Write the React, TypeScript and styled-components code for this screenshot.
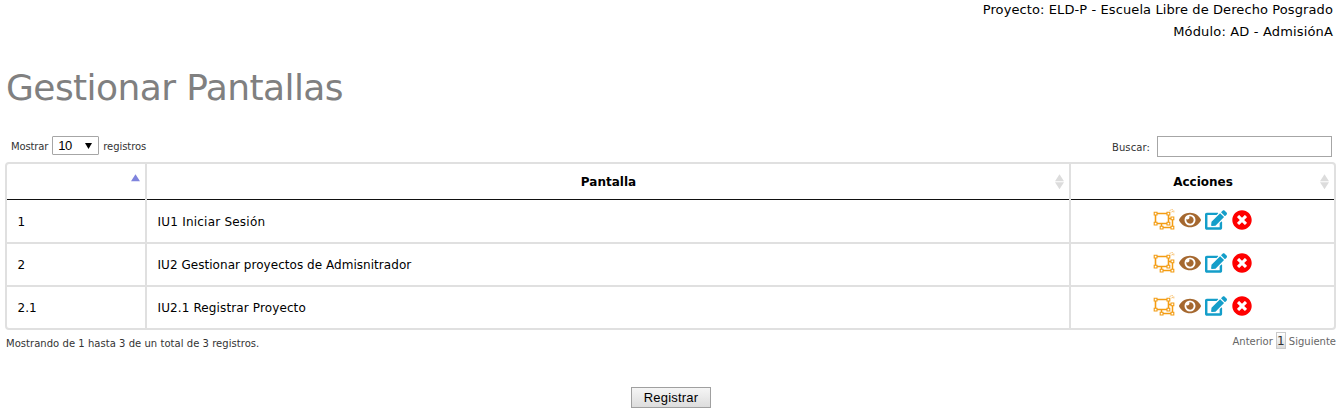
import React from "react";
import styled, { createGlobalStyle } from "styled-components";
import { FaEdit, FaEye, FaTimesCircle } from "react-icons/fa";

const GlobalStyle = createGlobalStyle`
  * { box-sizing: border-box; }
  body { margin: 0; background: #fff; color: #000; font: 12px/20px Verdana, "DejaVu Sans", sans-serif; }
`;

const Page = styled.div`
  width: 1336px;
  height: 412px;
  padding-left: 5px;
  overflow: hidden;
  display: flex;
  flex-direction: column;
`;

const Context = styled.div`
  height: 65px;
  margin-top: -1px;
  padding-right: 3px;
  display: flex;
  flex-direction: column;
  align-items: flex-end;
  line-height: 22px;
  font-size: 13px;
`;

const Label = styled.span<{ $spacing?: number }>`
  white-space: pre;
  letter-spacing: ${(p) => p.$spacing ?? 0}px;
`;

const Title = styled.h1`
  margin: 0;
  padding-left: 1px;
  height: 72px;
  font-size: 36px;
  line-height: 48px;
  font-weight: 400;
  color: #808080;
`;

const Toolbar = styled.div`
  height: 26px;
  padding: 0 4px 0 6px;
  display: flex;
  justify-content: space-between;
  align-items: flex-start;
  font-size: 10px;
  color: #333;
`;

const Field = styled.label<{ $line: number }>`
  display: flex;
  align-items: flex-start;
  line-height: ${(p) => p.$line}px;
`;

const Select = styled.span`
  width: 47px;
  height: 19px;
  margin: 0 4px;
  padding: 0 6px 0 5px;
  border: 1px solid #a6a6a6;
  border-radius: 1px;
  display: flex;
  align-items: center;
  justify-content: space-between;
  font: 13px/17px "Liberation Sans", Arial, sans-serif;
  letter-spacing: -0.4px;
  color: #000;
`;

const Search = styled.input`
  width: 175px;
  height: 21px;
  margin-left: 7px;
  border: 1px solid #a6a6a6;
`;

const Table = styled.div`
  width: 1331px;
  border: 2px solid #e0e0e0;
  border-radius: 4px;
`;

const Row = styled.div<{ $head?: boolean }>`
  display: grid;
  grid-template-columns: 140px 924px 263px;
  height: ${(p) => (p.$head ? 37 : 43)}px;
  border-bottom: ${(p) => (p.$head ? "0" : "2px solid #e0e0e0")};
  &:last-child { height: 41px; border-bottom: 0; }
`;

const Cell = styled.div`
  display: flex;
  align-items: center;
  padding: 1px 0 0 10.5px;
  border-right: 2px solid #e0e0e0;
  &:last-child { border-right: 0; }
`;

const HeadCell = styled(Cell)`
  padding: 0 5px 2px 15px;
  font-weight: 700;
  background: linear-gradient(#111, #111) 0 35px / 100% 1px no-repeat border-box;
  > span { flex: 1; text-align: center; }
`;

const Actions = styled(Cell)`
  justify-content: center;
  gap: 4px;
  padding: 0 0 3px 0;
  > :last-child { margin-left: 1px; }
`;

const Icon = styled.svg`
  display: block;
  flex: none;
`;

const Footer = styled.div`
  height: 57px;
  display: flex;
  justify-content: space-between;
  font-size: 10px;
  color: #333;
`;

const Info = styled.div`
  padding-left: 1px;
  line-height: 27px;
`;

const Pager = styled.div`
  display: flex;
  line-height: 23px;
  color: #666;
`;

const PageNumber = styled.span`
  width: 10px;
  height: 17px;
  margin: 2px 3px 0 3px;
  border: 1px solid #cacaca;
  background: linear-gradient(#fff, #dcdcdc);
  color: #333;
  font-size: 12px;
  line-height: 16px;
  display: flex;
  justify-content: center;
`;

const Submit = styled.button`
  width: 80px;
  height: 21px;
  margin-left: 626px;
  padding: 0;
  border: 1px solid #a0a0a0;
  background: linear-gradient(#f5f5f5, #dddddd);
  font: 13px/17px "Liberation Sans", Arial, sans-serif;
  letter-spacing: 0.2px;
  color: #000;
`;

function Sort({ active = false }: { active?: boolean }) {
  return (
    <Icon width="9" height="16" viewBox="0 0 9 16">
      <path d="M0 7.3 4.5 0.3 9 7.3z" fill={active ? "#7f84dd" : "#dcdcdc"} />
      {!active && <path d="M0 8.3h9L4.5 15.3z" fill="#dcdcdc" />}
    </Icon>
  );
}

function UngroupIcon() {
  return (
    <Icon width="22" height="22" viewBox="0 0 22 22" fill="none" stroke="#f39c12">
      <path d="M16 9.5h3.5v9h-11V15" strokeWidth="1.5" />
      <path d="M18 8h2.8v2.8H18zM18 17.2h2.8V20H18zM7.2 17.2H10V20H7.2z" fill="#fff" strokeWidth="1.1" />
      <path d="M2.5 4.5h13v10h-13z" fill="#fff" strokeWidth="1.6" />
      <path d="M1.2 3.2H4V6H1.2zM14 3.2h2.8V6H14zM1.2 13.2H4V16H1.2zM14 13.2h2.8V16H14z" fill="#fff" strokeWidth="1.1" />
      <path d="M16.5 1.6l1.4-.6M18.4.6l1.6.2M18.4 3l1.6-.6 1.2 1M20.7 1.4l.6 1" stroke="#f7bd68" strokeWidth=".9" />
    </Icon>
  );
}

function RowActions() {
  return (
    <Actions>
      <UngroupIcon />
      <FaEye size={22} color="#a5682f" />
      <FaEdit size={22} color="#149ec9" />
      <FaTimesCircle size={20} color="#ff0000" />
    </Actions>
  );
}

const screens = [
  { id: "1", name: "IU1 Iniciar Sesión", spacing: 0.22 },
  { id: "2", name: "IU2 Gestionar proyectos de Admisnitrador", spacing: 0.04 },
  { id: "2.1", name: "IU2.1 Registrar Proyecto", spacing: 0.12 },
];

export default function App() {
  return (
    <>
      <GlobalStyle />
      <Page>
        <Context>
          <Label $spacing={0.1}>Proyecto: ELD-P - Escuela Libre de Derecho Posgrado</Label>
          <Label $spacing={0.16}>Módulo: AD - AdmisiónA</Label>
        </Context>
        <Title><Label $spacing={-0.58}>Gestionar Pantallas</Label></Title>
        <Toolbar>
          <Field $line={22}>
            <Label $spacing={-0.14}>Mostrar</Label>
            <Select>
              10
              <Icon width="7" height="6" viewBox="0 0 7 6"><path d="M0 0h7L3.5 6z" /></Icon>
            </Select>
            <Label $spacing={-0.06}>registros</Label>
          </Field>
          <Field $line={24}><Label $spacing={0.1}>Buscar:</Label><Search /></Field>
        </Toolbar>
        <Table>
          <Row $head>
            <HeadCell><span /><Sort active /></HeadCell>
            <HeadCell><span>Pantalla</span><Sort /></HeadCell>
            <HeadCell><span>Acciones</span><Sort /></HeadCell>
          </Row>
          {screens.map((s) => (
            <Row key={s.id}>
              <Cell><Label>{s.id}</Label></Cell>
              <Cell><Label $spacing={s.spacing}>{s.name}</Label></Cell>
              <RowActions />
            </Row>
          ))}
        </Table>
        <Footer>
          <Info><Label $spacing={0.04}>Mostrando de 1 hasta 3 de un total de 3 registros.</Label></Info>
          <Pager><Label>Anterior</Label><PageNumber>1</PageNumber><Label>Siguiente</Label></Pager>
        </Footer>
        <Submit>Registrar</Submit>
      </Page>
    </>
  );
}
